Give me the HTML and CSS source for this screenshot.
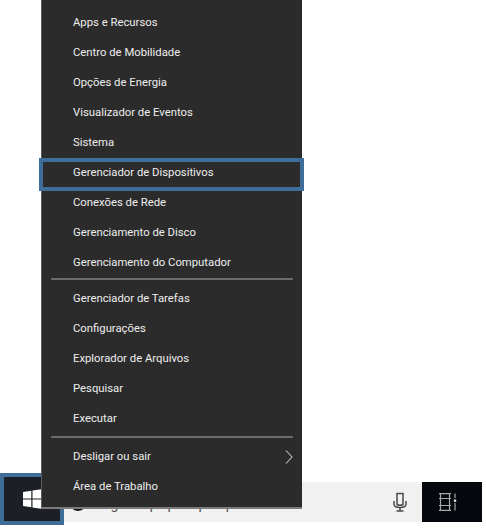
FILE: index.html
```html
<!DOCTYPE html>
<html lang="pt-BR">
<head>
    <meta charset="UTF-8">
    <title>Menu Iniciar</title>
    <link rel="stylesheet" href="styles.css">
</head>
<body>
    <!-- Menu de contexto -->
    <div class="menu">
        <div class="menu-item">Apps e Recursos</div>
        <div class="menu-item">Centro de Mobilidade</div>
        <div class="menu-item">Opções de Energia</div>
        <div class="menu-item">Visualizador de Eventos</div>
        <div class="menu-item">Sistema</div>
        <div class="menu-item selected">Gerenciador de Dispositivos</div>
        <div class="menu-item">Conexões de Rede</div>
        <div class="menu-item">Gerenciamento de Disco</div>
        <div class="menu-item">Gerenciamento do Computador</div>
        <div class="separator"></div>
        <div class="menu-item">Gerenciador de Tarefas</div>
        <div class="menu-item">Configurações</div>
        <div class="menu-item">Explorador de Arquivos</div>
        <div class="menu-item">Pesquisar</div>
        <div class="menu-item">Executar</div>
        <div class="separator separator-last"></div>
        <div class="menu-item">
            Desligar ou sair
            <svg class="chevron" width="8" height="14" viewBox="0 0 8 14"><path d="M1 .5 7 7 1 13.500" fill="none" stroke="#bdbdbd" stroke-width="1.100"/></svg>
        </div>
        <div class="menu-item">Área de Trabalho</div>
    </div>

    <!-- Barra de tarefas -->
    <div class="taskbar">
        <div class="start">
            <svg width="20" height="20" viewBox="0 0 20 20"><path d="M0 3 8.300 1.800V9.400H0ZM9.500 1.600 20 0V9.400H9.500ZM0 10.600H8.300V18.200L0 17ZM9.500 10.600H20V20L9.500 18.400Z" fill="#fff"/></svg>
        </div>
        <div class="search">
            <span class="cortana"></span>
            <span class="search-text">Digite aqui para pesquisar</span>
            <svg class="mic" width="14" height="20" viewBox="0 0 14 20"><path d="M4 1.500H10V12.500Q7 14 4 12.500Z" fill="none" stroke="#4a4a4a" stroke-width="1.500"/><path d="M1 9V12Q1 15.500 7 15.500T13 12V9M7 15.500V19M3.500 19H10.500" fill="none" stroke="#4a4a4a" stroke-width="1.500"/></svg>
        </div>
        <div class="task-view">
            <svg width="18" height="18" viewBox="0 0 18 18"><path d="M0 .7H12M0 17.300H12M0 5.500H12M0 12.500H12M1.500 .7V17.300M10.500 .7V17.300M16 .5V5M16 10V17.500" fill="none" stroke="#a8a8a8" stroke-width="1.200"/><rect x="14.800" y="6.500" width="2.400" height="2.400" fill="#e0e0e0"/></svg>
        </div>
    </div>
</body>
</html>
```

FILE: styles.css
```css
body {
    margin: 0;
    height: 529px;
    overflow: hidden;
    background: #fff;
    font-family: Roboto, "Open Sans", sans-serif;
}

.menu {
    position: absolute;
    top: 0;
    left: 41px;
    z-index: 10;
    width: 261px;
    box-sizing: border-box;
    padding: 7px 0 6px;
    background: #2b2b2b;
    border-bottom: 2px solid #7b7b7b;
    border-left: 1px solid #5c5c5c;
    color: #eee;
    font-size: 11.3px;
}

.menu-item {
    position: relative;
    display: flex;
    justify-content: space-between;
    align-items: center;
    height: 30px;
    box-sizing: border-box;
    padding: 1px 9px 0 31px;
}

.selected::after {
    content: '';
    position: absolute;
    top: 1px;
    left: -3px;
    right: -2px;
    bottom: -4px;
    border: 4px solid #3f6d99;
}

.separator {
    height: 2px;
    margin: 1px 9px 3px 9px;
    background: #6b6b6b;
}

.separator-last {
    margin-top: 3px;
}

.taskbar {
    display: flex;
    align-items: flex-start;
    padding-top: 473px;
}

.start {
    display: flex;
    align-items: center;
    width: 64px;
    height: 52px;
    box-sizing: border-box;
    padding-left: 19px;
    border: 4px solid #3f6d99;
    background: #1c2026;
}

.search {
    display: flex;
    align-items: center;
    width: 358px;
    height: 40px;
    box-sizing: border-box;
    margin-top: 9px;
    padding: 0 15px 0 5px;
    background: #f1f1f1;
    color: #555;
    font-size: 14px;
}

.cortana {
    width: 18px;
    height: 18px;
    box-sizing: border-box;
    flex: none;
    border: 3px solid #111;
    border-radius: 50%;
}

.search-text {
    flex: 1;
    padding: 3px 0 0 11px;
}

.task-view {
    display: flex;
    align-items: center;
    width: 60px;
    height: 40px;
    box-sizing: border-box;
    margin-top: 9px;
    padding-left: 17px;
    background: #05080d;
}
```
